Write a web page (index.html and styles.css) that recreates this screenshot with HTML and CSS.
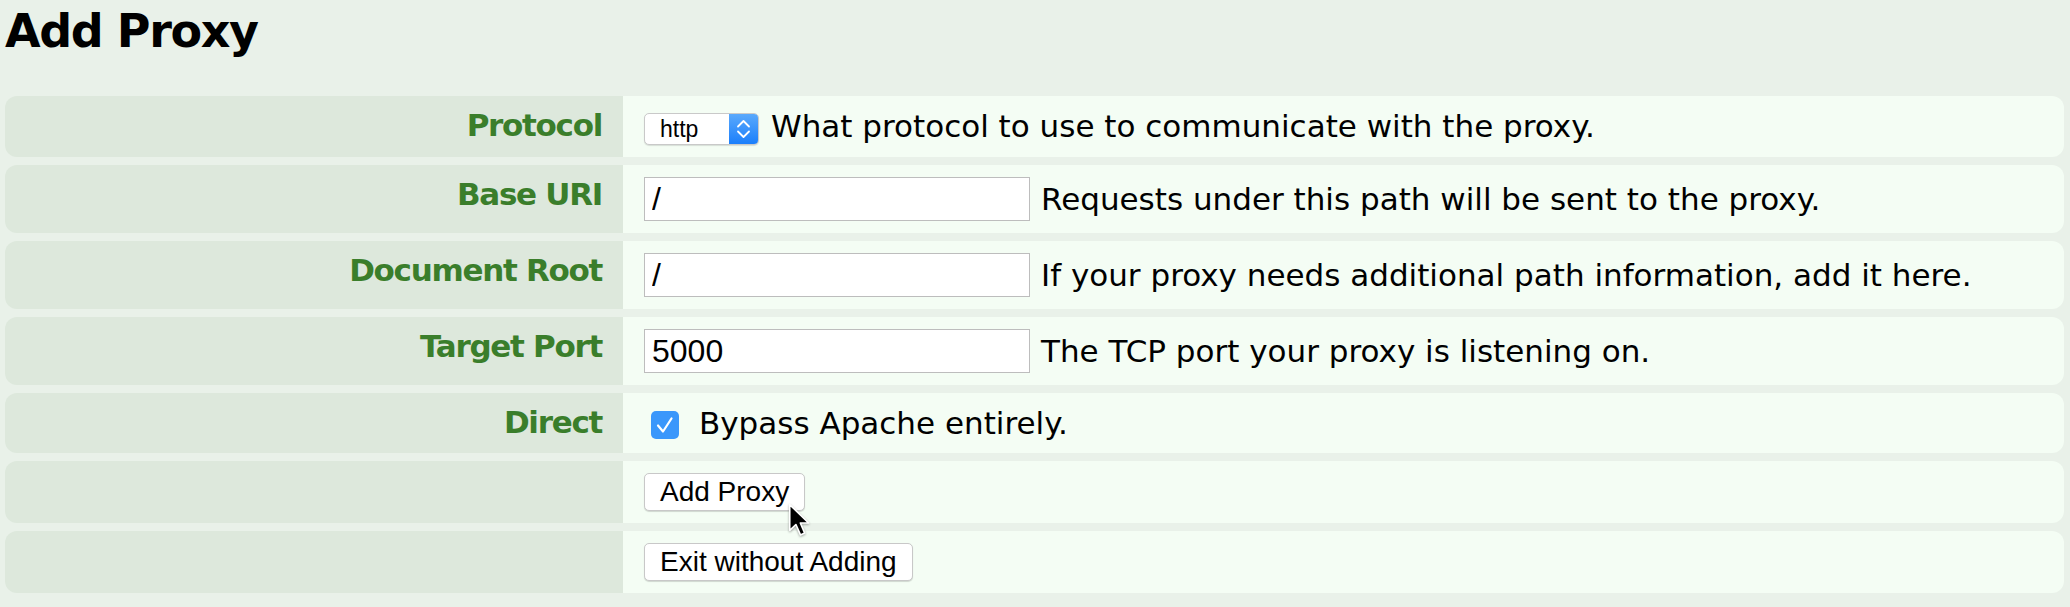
FILE: index.html
```html
<!DOCTYPE html>
<html lang="en">
<head>
<meta charset="utf-8">
<title>Add Proxy</title>
<link rel="stylesheet" href="styles.css">
</head>
<body>
<h1 class="title">Add Proxy</h1>
<form class="form">
  <div class="row">
    <div class="label">Protocol</div>
    <div class="value"><span class="select"><select class="select-native"><option>http</option><option>https</option></select><span class="select-arrow"><svg width="29" height="30" viewBox="0 0 29 30"><path d="M9 12.5 L14.5 7 L20 12.5 M9 17.5 L14.5 23 L20 17.5" fill="none" stroke="#fff" stroke-width="1.8" stroke-linecap="round" stroke-linejoin="round"/></svg></span></span><span class="desc desc-after-select">What protocol to use to communicate with the proxy.</span></div>
  </div>
  <div class="row">
    <div class="label">Base URI</div>
    <div class="value"><input class="text-input" type="text" value="/"><span class="desc">Requests under this path will be sent to the proxy.</span></div>
  </div>
  <div class="row">
    <div class="label">Document Root</div>
    <div class="value"><input class="text-input" type="text" value="/"><span class="desc">If your proxy needs additional path information, add it here.</span></div>
  </div>
  <div class="row">
    <div class="label">Target Port</div>
    <div class="value"><input class="text-input" type="text" value="5000"><span class="desc">The TCP port your proxy is listening on.</span></div>
  </div>
  <div class="row">
    <div class="label">Direct</div>
    <div class="value"><span class="checkbox"><svg width="28" height="28" viewBox="0 0 28 28"><rect x="0" y="0" width="28" height="28" rx="5" fill="#3a97fb"/><path d="M7 14.5 L12 20.5 L20.5 7.5" fill="none" stroke="#fff" stroke-width="2.2" stroke-linecap="round" stroke-linejoin="round"/></svg></span><span class="desc desc-after-check">Bypass Apache entirely.</span></div>
  </div>
  <div class="row">
    <div class="label"></div>
    <div class="value actions">
      <button class="btn" type="button">Add Proxy</button>
      <svg class="cursor" width="23" height="35" viewBox="0 0 14 21.5"><path d="M1 1 L1 16.8 L4.8 13.2 L7.6 19.6 L10.2 18.5 L7.5 12.3 L12.6 12.3 Z" fill="#000" stroke="#fff" stroke-width="1" stroke-linejoin="round"/></svg>
    </div>
  </div>
  <div class="row">
    <div class="label"></div>
    <div class="value actions">
      <button class="btn" type="button">Exit without Adding</button>
    </div>
  </div>
</form>
</body>
</html>
```
FILE: styles.css
```css
html, body {
  margin: 0;
  padding: 0;
  background: #e9f1e9;
}

body {
  font-family: "DejaVu Sans", Verdana, sans-serif;
  color: #000;
  padding: 0 6px 0 5px;
}

.title {
  margin: 4px 0 38px 0;
  font-size: 46px;
  font-weight: bold;
  letter-spacing: -1.4px;
  line-height: 54px;
}

.form {
  display: flex;
  flex-direction: column;
  gap: 8px;
}

.row {
  display: flex;
}

.label {
  flex: none;
  width: 597px;
  padding: 11px 21px 13px 0;
  background: #dde8dc;
  border-radius: 12px 0 0 12px;
  text-align: right;
  color: #3a7e2b;
  font-weight: bold;
  font-size: 31px;
  letter-spacing: -1.3px;
  line-height: 36px;
}

.value {
  flex: 1;
  padding: 12px 21px;
  background: #f4fdf4;
  border-radius: 0 12px 12px 0;
  font-size: 31px;
  line-height: 36px;
  white-space: nowrap;
}

.desc {
  margin-left: 11px;
}

.desc-after-select {
  margin-left: 12px;
}

.desc-after-check {
  margin-left: 20px;
}

.select {
  display: inline-flex;
  height: 32px;
  box-sizing: border-box;
  border: 1px solid #c9c9c9;
  border-radius: 5px;
  overflow: hidden;
  background: #fff;
  box-shadow: 0 1px 1px rgba(0, 0, 0, 0.12);
  vertical-align: baseline;
}

.select-native {
  appearance: none;
  -webkit-appearance: none;
  border: 0;
  outline: 0;
  margin: 0;
  background: transparent;
  width: 84px;
  height: 30px;
  padding: 0 0 0 15px;
  font-family: "Liberation Sans", Arial, sans-serif;
  font-size: 23px;
  color: #000;
}

.select-arrow {
  display: flex;
  width: 29px;
  height: 30px;
  background: linear-gradient(#5aa9fc, #1b7ffb);
}

.text-input {
  box-sizing: border-box;
  width: 386px;
  height: 44px;
  margin: 0;
  padding: 3px 7px;
  border: 1px solid #bdbdbd;
  border-radius: 0;
  background: #fff;
  font-family: "Liberation Sans", Arial, sans-serif;
  font-size: 32px;
  color: #000;
  outline: none;
}

.checkbox {
  display: inline-block;
  width: 28px;
  height: 28px;
  margin-left: 7px;
  vertical-align: -5px;
}

.checkbox svg {
  display: block;
}

.actions {
  display: flex;
  align-items: center;
  position: relative;
}

.btn {
  box-sizing: border-box;
  height: 38px;
  margin: 0;
  padding: 0 15px;
  border: 1px solid #c8c8c8;
  border-radius: 5px;
  background: #fff;
  box-shadow: 0 1px 1px rgba(0, 0, 0, 0.15);
  font-family: "Liberation Sans", Arial, sans-serif;
  font-size: 28px;
  color: #000;
}

.cursor {
  position: absolute;
  left: 165px;
  top: 42px;
  z-index: 2;
  filter: drop-shadow(0 1px 1px rgba(0, 0, 0, 0.35));
}
```
